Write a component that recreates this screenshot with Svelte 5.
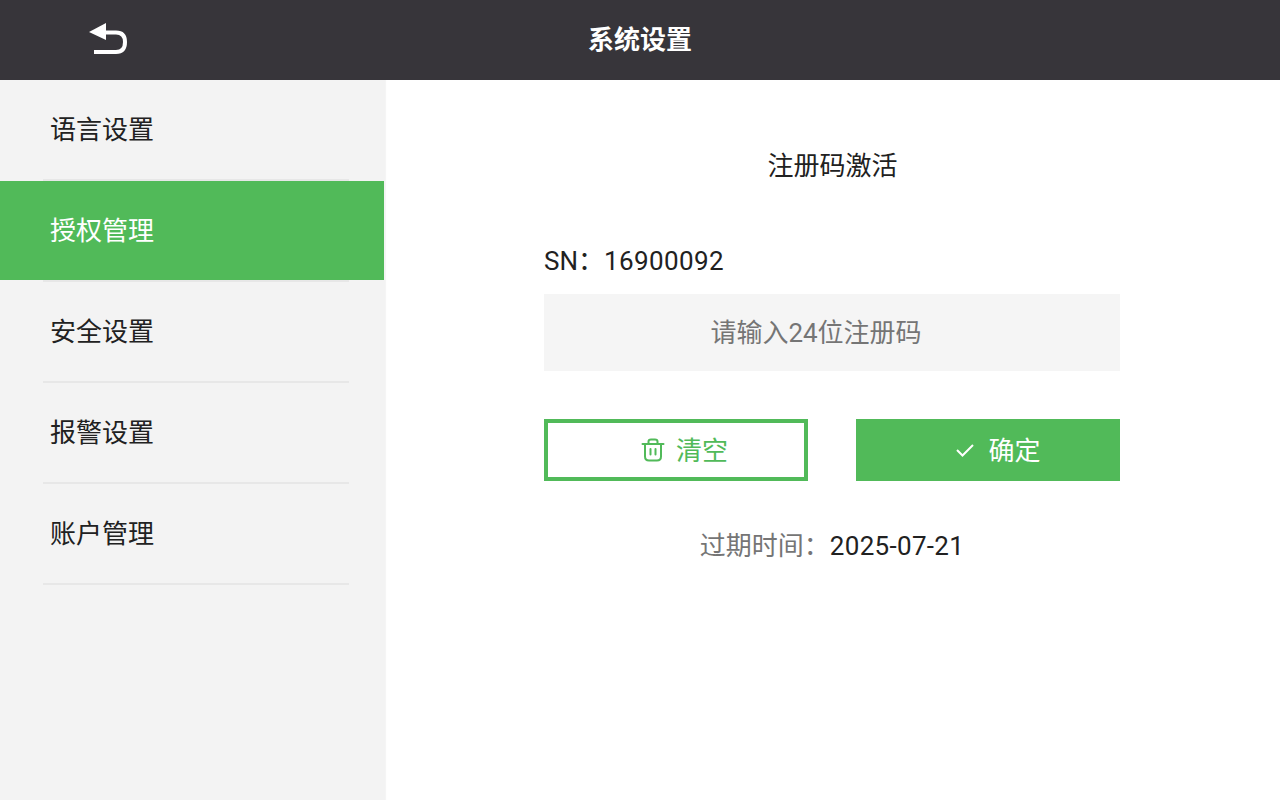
<script>
  const menu = ['语言设置', '授权管理', '安全设置', '报警设置', '账户管理'];
  let active = $state(1);
  let code = $state('');
</script>

<div class="page">
  <header class="topbar">
    <button class="back" aria-label="返回">
      <svg width="40" height="32" viewBox="0 0 40 32">
        <path d="M1 10 L18 1 V18 Z" fill="#fff" />
        <path d="M16 10.5 H28 Q37 10.5 37 20 Q37 30 28 30 H6" fill="none" stroke="#fff" stroke-width="4" />
      </svg>
    </button>
    <h1>系统设置</h1>
  </header>

  <div class="body">
    <nav class="sidebar">
      {#each menu as label, i}
        <button class="item" class:active={active === i} onclick={() => (active = i)}>{label}</button>
        <div class="divider"></div>
      {/each}
    </nav>

    <main class="content">
      <h2>注册码激活</h2>
      <div class="form">
        <div class="sn">SN：<b>16900092</b></div>
        <input class="code" placeholder="请输入24位注册码" bind:value={code} />
        <div class="actions">
          <button class="btn outline" onclick={() => (code = '')}>
            <svg width="24" height="24" viewBox="0 0 24 24" fill="none" stroke="#51ba59" stroke-width="2">
              <path d="M1.5 6 H22.5" stroke-linecap="round" />
              <path d="M7.5 6 V3.5 Q7.5 1.5 10 1.5 H14 Q16.5 1.5 16.5 3.5 V6" />
              <path d="M4 6 V18.5 Q4 22.5 8 22.5 H16 Q20 22.5 20 18.5 V6" />
              <path d="M9.5 11 V16.5 M14.5 11 V16.5" stroke-linecap="round" />
            </svg>
            清空
          </button>
          <button class="btn solid">
            <svg width="20" height="20" viewBox="0 0 20 20" fill="none" stroke="#fff" stroke-width="2">
              <path d="M2 10 L7.5 15.5 L18 5" />
            </svg>
            确定
          </button>
        </div>
        <div class="expire"><span>过期时间：</span><b>2025-07-21</b></div>
      </div>
    </main>
  </div>
</div>

<style>
  :global(body) {
    margin: 0;
    font-family: Roboto, "Noto Sans CJK SC", sans-serif;
    color: #212121;
  }

  .page {
    width: 1280px;
    height: 800px;
    display: flex;
    flex-direction: column;
    overflow: hidden;
  }

  .topbar {
    height: 80px;
    box-sizing: border-box;
    padding-bottom: 5px;
    flex: none;
    background: #37353a;
    display: flex;
    align-items: center;
    justify-content: center;
    position: relative;
  }

  .topbar h1 {
    margin: 0;
    font-size: 26px;
    font-weight: 700;
    color: #fff;
  }

  .back {
    position: absolute;
    left: 88px;
    top: 22px;
    width: 40px;
    height: 32px;
    padding: 0;
    border: none;
    background: none;
    line-height: 0;
  }

  .body {
    flex: 1;
    display: flex;
  }

  .sidebar {
    width: 385px;
    flex: none;
    background: #f3f3f3;
    box-shadow: 1px 0 1px rgba(0, 0, 0, 0.04);
    display: flex;
    flex-direction: column;
    align-items: stretch;
  }

  .item {
    height: 99px;
    padding: 0 0 4px 50px;
    border: none;
    background: none;
    margin-right: 1px;
    text-align: left;
    font-family: inherit;
    font-size: 26px;
    color: #212121;
  }

  .item.active {
    background: #51ba59;
    color: #fff;
  }

  .divider {
    height: 2px;
    margin: 0 36px 0 43px;
    background: #e7e7e7;
  }

  .content {
    flex: 1;
    display: flex;
    flex-direction: column;
    align-items: center;
  }

  h2 {
    margin: 66px 0 0;
    height: 40px;
    line-height: 40px;
    font-size: 26px;
    font-weight: 400;
  }

  .form {
    width: 576px;
    margin: 55px 1px 0 0;
  }

  .sn {
    height: 40px;
    line-height: 40px;
    font-size: 26px;
    margin-bottom: 13px;
  }

  .sn b {
    font-weight: 400;
    letter-spacing: 0.4px;
  }

  .code {
    display: block;
    box-sizing: border-box;
    width: 100%;
    height: 77px;
    padding: 0 32px 0 0;
    border: none;
    outline: none;
    background: #f5f5f5;
    text-align: center;
    font-family: inherit;
    font-size: 26px;
    color: #212121;
  }

  .code::placeholder {
    color: #757575;
    opacity: 1;
  }

  .actions {
    display: grid;
    grid-template-columns: 1fr 1fr;
    gap: 48px;
    margin-top: 48px;
  }

  .btn {
    height: 62px;
    box-sizing: border-box;
    display: flex;
    align-items: center;
    justify-content: center;
    font-family: inherit;
    font-size: 26px;
    padding: 0 0 4px 17px;
  }

  .btn svg {
    margin-top: 4px;
  }

  .btn.outline {
    background: #fff;
    border: 4px solid #51ba59;
    color: #51ba59;
    gap: 11px;
  }

  .btn.solid {
    background: #51ba59;
    border: none;
    color: #fff;
    gap: 13px;
    padding-left: 20px;
  }

  .expire {
    margin-top: 45px;
    height: 40px;
    line-height: 40px;
    text-align: center;
    font-size: 26px;
  }

  .expire span {
    color: #757575;
  }

  .expire b {
    font-weight: 400;
    letter-spacing: 0.3px;
  }
</style>
